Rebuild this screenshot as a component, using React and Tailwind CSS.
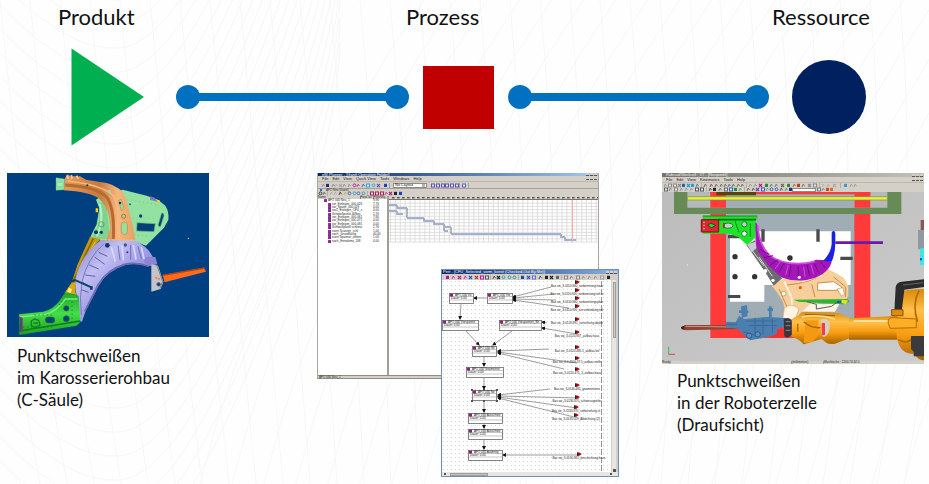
import React from "react";

/* ---------- faint mesh behind the slide ---------- */
function Mesh() {
  const fans = Array.from({ length: 34 }, (_, i) => {
    const x = i * 30 - 30;
    return `M${x} 0 Q${x + 22} 240 ${x + 70 - i * 3} 484`;
  });
  const bowls = Array.from({ length: 24 }, (_, i) => {
    const y = i * 24 - 90;
    return `M-20 ${y} Q60 ${y + 95} 120 ${y + 90} T260 ${y - 120} T340 ${y - 420}`;
  });
  const slants = Array.from({ length: 30 }, (_, i) => {
    const x = 200 + i * 32;
    return `M${x} 484 Q${x + 60} 240 ${x + 230} -10`;
  });
  return (
    <svg
      className="absolute inset-0 h-full w-full"
      viewBox="0 0 929 484"
      preserveAspectRatio="none"
      fill="none"
      stroke="#f6f8f8"
      aria-hidden="true"
    >
      {[...fans, ...bowls, ...slants].map((d) => (
        <path key={d} d={d} />
      ))}
    </svg>
  );
}

function Connector({ className }) {
  return (
    <div className={`flex items-center ${className}`}>
      <span className="size-6 shrink-0 rounded-full bg-[#0070c0]" />
      <span className="-mx-1 h-2 flex-1 bg-[#0070c0]" />
      <span className="size-6 shrink-0 rounded-full bg-[#0070c0]" />
    </div>
  );
}

/* ---------- body panel, C pillar ---------- */
function PillarDrawing() {
  return (
    <svg
      viewBox="21 24 606 492"
      className="block h-[164px] w-[202px] bg-[#004080]"
      role="img"
      aria-label="C-Säule"
    >
      <defs>
        <linearGradient id="arch" x1="0" y1="0" x2="1" y2="1">
          <stop offset="0" stopColor="#8582c8" />
          <stop offset=".3" stopColor="#c0bef2" />
          <stop offset=".55" stopColor="#9b98e0" />
          <stop offset="1" stopColor="#7673bd" />
        </linearGradient>
        <linearGradient id="pillar" x1="0" y1="0" x2="1" y2="0">
          <stop offset="0" stopColor="#e39c5c" />
          <stop offset=".5" stopColor="#c67a3d" />
          <stop offset=".75" stopColor="#f6b67c" />
          <stop offset="1" stopColor="#e9a163" />
        </linearGradient>
        <linearGradient id="sill" x1="0" y1="0" x2="0" y2="1">
          <stop offset="0" stopColor="#1fa52a" />
          <stop offset=".5" stopColor="#45dc4a" />
          <stop offset="1" stopColor="#18a022" />
        </linearGradient>
      </defs>
      <path d="M368 74 L440 92 L474 104 L496 122 Q508 140 505 165 L492 188 L438 242 L402 228 L290 226 L270 218 L290 178 L298 130 L288 104 L300 96Z" fill="#93e2a2" />
      <path d="M300 112 L318 112 L330 225 L275 222 L296 178Z" fill="#7fd290" />
      <path d="M300 118 Q312 170 290 214" fill="none" stroke="#b7f2c2" strokeWidth="6" />
      <path d="M168 38 L194 42 L192 74 L168 76Z" fill="#93e2a2" stroke="#6dc080" />
      <path d="M171 52h18v13h-18z" fill="#a9edb5" stroke="#5fb373" />
      <path d="M194 42 L202 28 L212 34 L240 34 L258 44 L320 54 Q366 66 378 100 L398 180 L406 226 L320 226 L330 190 Q330 130 296 100 Q266 80 192 76Z" fill="url(#pillar)" />
      <path d="M196 60 Q300 66 324 102 Q344 140 340 222" fill="none" stroke="#b56a30" strokeWidth="9" />
      <path d="M204 48 Q310 60 342 94 Q358 126 358 218" fill="none" stroke="#f9b880" strokeWidth="5" />
      <path d="M200 32l6 10m8-12l2 12m14-10l4 10" stroke="#ffc893" strokeWidth="5" />
      <rect x="364" y="171" width="18" height="38" rx="9" fill="#93e2a2" stroke="#c58446" strokeWidth="2" />
      <path d="M356 106l8-3 8 28-8 6z" fill="#93e2a2" stroke="#c58446" strokeWidth="2" />
      <circle cx="371" cy="154" r="6" fill="#93e2a2" stroke="#b56a30" strokeWidth="3" />
      <circle cx="328" cy="80" r="5" fill="#93e2a2" />
      <circle cx="262" cy="61" r="3" fill="#0d3860" />
      <circle cx="360" cy="114" r="4" fill="#193c5b" />
      <path d="M411 173 L466 176 L462 200 L410 198Z" fill="#073d78" stroke="#6dbb80" strokeWidth="2" />
      <path d="M485 144 Q492 142 492 152 L482 184 Q475 188 475 178Z" fill="#073d78" stroke="#6dbb80" strokeWidth="2" />
      <circle cx="422" cy="153" r="5" fill="#073d78" />
      <circle cx="390" cy="118" r="3" fill="#276b62" />
      <path d="M382 104 L470 118 L494 132 M398 160 L470 158 M402 210 L450 214" fill="none" stroke="#6dc080" strokeWidth="2" strokeDasharray="3 9" />
      <path d="M450 94 l14 4 8 12 -22 -6z" fill="#7b78b8" />
      <path d="M472 105h7v8h-7zM287 130h7v12h-7z" fill="#f2d21c" />
      <circle cx="304" cy="178" r="8" fill="none" stroke="#5ba66b" strokeWidth="3" />
      <circle cx="288" cy="202" r="6" fill="#0b3a66" />
      <circle cx="304" cy="202" r="5" fill="#0b3a66" />

      <path d="M270 216 L302 222 L258 270 L232 330 L224 386 L194 384 L216 350 L232 300Z" fill="#c69a10" />
      <path d="M280 220 L248 286 L206 380" fill="none" stroke="#8c6900" strokeWidth="5" />
      <path d="M286 230 L250 296" stroke="#e9c22e" strokeWidth="3" />
      <path d="M196 382 L222 346 L228 390Z" fill="#d8a916" />
      <path d="M206 368l10 4-4 12-10-4z" fill="#fff27a" />

      <path d="M302 226 L404 226 Q452 248 466 294 L446 304 Q410 292 376 300 Q322 316 296 362 L256 440 L246 470 L238 468 L232 400 Q222 370 230 326 Q250 264 302 226Z" fill="url(#arch)" />
      <path d="M312 236 Q262 280 246 350 Q238 400 244 450" fill="none" stroke="#7975c2" strokeWidth="3" />
      <path d="M296 262 L322 274 M284 276 L314 298 M268 300 L296 312 M256 330 L286 334 M248 352 L274 368 M244 374 L266 382" stroke="#6360a8" strokeWidth="3" />
      <path d="M334 246 L346 290 M366 240 L370 286 M400 240 L408 284 M424 246 L432 282" stroke="#d9d7ff" strokeWidth="5" />
      <path d="M354 242 L360 284 M392 240 L392 284 M414 244 L424 280" stroke="#716eb9" strokeWidth="3" />
      <path d="M446 304 Q410 290 374 298 Q320 314 294 360 L254 440" fill="none" stroke="#6d6ab6" strokeWidth="5" />
      <path d="M438 276 L466 276 L472 298 L446 304 L432 290Z" fill="#8986d2" />
      <path d="M302 224 L404 226" stroke="#f9b97f" strokeWidth="4" strokeDasharray="7 4" />
      <circle cx="322" cy="241" r="7" fill="#14346f" />
      <circle cx="376" cy="240" r="5" fill="#4d4a92" />
      <circle cx="382" cy="262" r="3" fill="#35337a" />
      <path d="M222 344 L276 368" stroke="#0c4468" strokeWidth="6" />
      <path d="M216 344h8v8h-8zM270 364h8v10h-8z" fill="#0c4468" />

      <path d="M454 298 L474 302 L490 350 L482 372 L454 380 Z" fill="#c4c4c8" />
      <path d="M472 304 L488 350 L480 370" fill="none" stroke="#7f8088" strokeWidth="3" />
      <path d="M466 338l20 6" stroke="#ff6a24" strokeWidth="4" strokeDasharray="6 3" />
      <circle cx="476" cy="358" r="6" fill="#0b3f78" stroke="#8a8a90" strokeWidth="2" />
      <path d="M488 330 L612 308 L618 320 L494 352Z" fill="#ff6a1c" />
      <path d="M488 331 L614 309" stroke="#b84306" strokeWidth="4" />

      <path d="M57 448 L130 440 Q160 434 180 406 L196 382 L236 392 L241 470 L230 482 L58 510Z" fill="url(#sill)" />
      <path d="M60 456 L136 448 Q170 440 196 402 L232 402" fill="none" stroke="#74f077" strokeWidth="4" />
      <path d="M58 498 L240 468" stroke="#0f7d18" strokeWidth="4" />
      <rect x="136" y="456" width="28" height="18" rx="8" fill="#0a4178" stroke="#157f1c" strokeWidth="2" />
      <circle cx="199" cy="430" r="8" fill="#0a4178" stroke="#157f1c" strokeWidth="2" />
      <circle cx="199" cy="461" r="9" fill="#0a4178" stroke="#157f1c" strokeWidth="2" />
      <path d="M94 468l10-6 12 4 4 14-14 8-12-6z M100 474h14" fill="none" stroke="#157f1c" strokeWidth="4" />
      <path d="M58 458h8v40h-8z" fill="#136d4c" />
      <path d="M56 456 L66 460 V500" fill="none" stroke="#b2129e" strokeWidth="4" />
      <path d="M104 450h60M70 486h96M178 420l10-14M216 410v64" stroke="#0c6f14" strokeWidth="3" strokeDasharray="3 9" />
      <circle cx="565" cy="220" r="2" fill="#dbe6f2" />
    </svg>
  );
}

/* ---------- small pieces shared by the program windows ---------- */
function ToolStrip({ glyphs, width }) {
  return (
    <svg viewBox={`0 0 ${width} 5`} width={width} height="5" className="block shrink-0" aria-hidden="true">
      {glyphs.map(([x, color, kind], i) => {
        if (kind === "box")
          return (
            <g key={i}>
              <rect x={x} y="0.5" width="4" height="4" fill={color} />
              <rect x={x + 1} y="1.5" width="2" height="2" fill="#e8e4f4" />
            </g>
          );
        if (kind === "bar") return <rect key={i} x={x} y="0" width="0.6" height="5" fill={color} />;
        if (kind === "x") return <path key={i} d={`M${x} 1l3 3m0-3l-3 3`} stroke={color} strokeWidth="1.1" />;
        if (kind === "o") return <circle key={i} cx={x + 1.5} cy="2.3" r="1.4" fill="none" stroke={color} strokeWidth="0.9" />;
        if (kind === "fill") return <rect key={i} x={x} y="0.8" width="3" height="3.2" fill={color} />;
        return <path key={i} d={`M${x} 4L${x + 1.2} 1.2L${x + 2.6} 3.2`} fill="none" stroke={color} strokeWidth="0.8" />;
      })}
    </svg>
  );
}

function WindowButtons() {
  return (
    <span className="ml-auto flex gap-px pr-px">
      {["a", "b", "c"].map((k) => (
        <span key={k} className="h-[3px] w-[3px] border-b border-[#55524c] bg-[#d4d0c8]" />
      ))}
    </span>
  );
}

const ganttTools = [
  [3, "#8a8780"], [7, "#16307c", "fill"], [13, "#7d7a74"], [16, "#aaa69c"], [20, "#aaa69c", "x"], [24, "#8a8780"], [29, "#8a8780"],
  [34, "#b0209a", "o"], [38, "#c020a0"], [43, "#2b50c8"], [47, "#2f9ee8", "box"], [53, "#2fa0d8", "o"], [58, "#6a58c0", "x"],
  [65, "#1a44c8", "fill"], [70, "#888", "bar"],
];
const ganttToolsRight = [0, 5, 10, 14, 19, 24].map((x) => [x, "#5a52b0", "box"]).concat([[28, "#888", "bar"], [31, "#5568c8", "box"], [37, "#888", "bar"]]);
const ganttToolsLow = [
  [1, "#333", "o"], [5, "#555"], [9, "#999", "bar"], [12, "#aaa69c"], [16, "#aaa69c"], [21, "#222"], [26, "#c8b420"], [30, "#3a6ab8", "o"],
  [35, "#3a9ab8", "o"], [39, "#3a6ab8", "o"], [44, "#3a9ab8", "o"], [49, "#999", "bar"], [52, "#9a1c60", "box"], [57, "#b01848", "box"],
  [62, "#aa1c58", "box"], [67, "#c02868"], [71, "#a02c80", "x"], [76, "#222", "fill"], [81, "#1a44c8", "fill"],
];

const operations = [
  ["AFO 040 Neu_1", "9.96", 1], ["vor_Einlegen_000-029", "7.76"], ["vor_Spann_000-029", "4.00"], ["vor2_Einlegen_CFU_s", "4.00"],
  ["Schweißpunkt 40Neu", "2.76"], ["vor_Einlegen_000-061", "7.80"], ["vor_Einlegen_000-071", "4.00"], ["vor_Einlegen_000-081", "4.00"],
  ["Schweißpunkt schliess", "2.76"], ["nurnr Scanner_schl", "1.00"], ["nach_Grundfläche", "40.00"],
  ["nurnr Spanner_öffnen", "1.00"], ["nach_Entnahme_208", "4.00"],
];

const bars = [
  [388, 9, 205], [397, 10, 208], [388, 9, 211], [397, 6, 214], [407, 17, 218], [424, 10, 221], [434, 10, 224],
  [444, 7, 227], [444, 4, 231], [451, 110, 234], [561, 4, 237], [565, 11, 240],
];

function GanttWindow() {
  return (
    <div className="flex h-[206px] w-[282px] flex-col border-x border-[#a9a69f] bg-[#d4d0c8] font-['Liberation_Sans',sans-serif] text-[4px] leading-[4px] text-[#222]">
      <div className="flex h-[3px] items-center bg-linear-to-r from-[#0a246a] to-[#a6caf0] text-white">
        <span className="pl-1">eM-Planner - [Gantt Operation Folder]</span>
        <WindowButtons />
      </div>
      <div className="flex h-[5px] items-center gap-1 pl-1">
        {["File", "Edit", "View", "Quick View", "Tools", "Windows", "Help"].map((m) => (
          <span key={m}>{m}</span>
        ))}
        <WindowButtons />
      </div>
      <div className="flex h-[7px] items-center border-t border-[#bbb7ae] pl-px">
        <ToolStrip glyphs={ganttTools} width={72} />
        <span className="mr-1 ml-[2px] flex h-[5px] w-[34px] items-center justify-between border border-[#8d8a83] bg-white px-px">
          No Layout <span className="h-[3px] w-[3px] bg-[#b7b3aa]" />
        </span>
        <ToolStrip glyphs={ganttToolsRight} width={40} />
      </div>
      <div className="flex h-[3px] items-center gap-1 border-t border-[#a5a199] pl-[2px] text-[3px] leading-[3px]">
        <span className="h-[2px] w-[2px] bg-[#2a6ad0]" />
        AFO Neu (Gantt)
      </div>
      <div className="flex h-[5px] items-center">
        <ToolStrip glyphs={ganttToolsLow} width={86} />
      </div>
      <div className="flex min-h-0 flex-1">
        <div className="w-[69px] bg-white">
          <table className="h-[47px] w-full table-fixed border-collapse text-[3px] leading-[3px]">
            <thead className="bg-[#d4d0c8] text-left">
              <tr>
                <th className="w-[42px] border-r border-[#8d8a83] p-0 font-normal">Name</th>
                <th className="w-[13px] border-r border-[#8d8a83] p-0 font-normal whitespace-nowrap">Float list</th>
                <th className="p-0 font-normal">Planning</th>
              </tr>
            </thead>
            <tbody>
              {operations.map(([name, time, top], i) => (
                <tr key={i}>
                  <td className={`p-0 whitespace-nowrap ${top ? "pl-[6px]" : "pl-[10px]"}`}>
                    <span className="flex items-center gap-px">
                      <span className="h-[3px] w-[3px] shrink-0 bg-linear-to-br from-[#d01cb4] to-[#3a2f78]" />
                      {name}
                    </span>
                  </td>
                  <td className="p-0" />
                  <td className="p-0">{time}</td>
                </tr>
              ))}
            </tbody>
          </table>
        </div>
        <div className="w-[2px] bg-[#a19e97]" />
        <div className="flex min-w-0 flex-1 flex-col bg-white">
          <div className="h-[4px] border-b border-[#77746d] bg-[#d4d0c8]">
            <svg viewBox="0 0 209 3" className="block h-[3px] w-full" aria-hidden="true">
              {Array.from({ length: 42 }, (_, i) => (
                <rect key={i} x={3 + i * 5} y="1" width="2.6" height="1.4" fill="#55524c" />
              ))}
            </svg>
          </div>
          <svg viewBox="389 200 209 43" className="block h-[43px] w-full" role="img" aria-label="Gantt">
            {Array.from({ length: 43 }, (_, i) => (
              <path key={i} d={`M${390.5 + i * 4.9} 200V242`} stroke="#d8d8d8" strokeWidth="0.8" />
            ))}
            {Array.from({ length: 13 }, (_, i) => (
              <path key={i} d={`M388 ${203.2 + i * 3.24}H598`} stroke="#d8d8d8" strokeWidth="0.8" />
            ))}
            <path d="M397 205v4M397 211v4M407 208v10M424 218v4M434 221v4M444 224v7M451 227v7M561 234v4M565 237v4" stroke="#555" strokeWidth="0.8" />
            {bars.map(([x, w, y]) => (
              <rect key={`${x}-${y}`} x={x} y={y - 1} width={w} height="2" fill="#a3b1d0" />
            ))}
            <path d="M572.5 200V242" stroke="#ffa8a8" />
          </svg>
        </div>
      </div>
      <div className="flex h-[4px] items-center border-y border-[#918e87] pl-px text-[3px] leading-[3px]">AFO 040 Neu_1</div>
    </div>
  );
}

/* ---------- PERT window ---------- */
const pertTools = [
  [4, "#b01890", "fill"], [10, "#c01890"], [16, "#c01890", "x"], [22, "#b01890"], [27, "#2b50c8", "x"], [33, "#d03030", "x"], [38, "#b01890", "box"],
  [43, "#555", "box"], [48, "#999", "bar"], [51, "#333"], [55, "#222", "x"], [60, "#2a9aa8", "o"], [66, "#2a9aa8", "o"], [71, "#2a9aa8", "o"],
  [76, "#999", "bar"], [79, "#1f44a8", "fill"], [85, "#2058c0", "x"], [90, "#6a62d0", "box"], [97, "#333"], [103, "#222", "fill"], [108, "#222", "x"],
  [114, "#5a6a50", "fill"], [119, "#999", "bar"], [122, "#8a8780", "box"], [128, "#777"], [134, "#8a8780", "box"], [140, "#8a8780"],
  [146, "#8a8780"], [152, "#8a8780"], [158, "#999", "box"], [165, "#222", "fill"],
];
const nodes = [
  [450, 292, 24, "AFO 030 Vorbe"], [488, 292, 25, "AFO 030 Vorbe"], [443, 319, 36, "AFO 040 Vorspannen_020"], [500, 319, 42, "AFO 030 Vorspannen_Beglaub"],
  [473, 345, 24, "AFO 030 Neu_"], [467, 366, 37, "AFO 030 Geometrieren_1"], [473, 389, 24, "AFO 030 Neu_2"],
  [469, 412, 34, "AFO 030 Ausschweissen"], [469, 428, 34, "AFO 030 Ausschweissen"], [469, 449, 34, "AFO 030 Ausbringen"],
];
const inputs = [
  [578, 281, "Bas vw_3-0110.960_vorbereitung.haus"],
  [578, 289, "Bas vw_3-0110.920_vorbereitung.teil.re"],
  [578, 297, "Bas vw_3-0110.960_vorbereitungsplan"],
  [578, 305, "Bas vw_3-0110.920_vor.verbindung.teil"],
  [578, 318, "Bas vw_3-0120.891_vorrichtung.objekt"],
  [578, 331, "Bas vw_3-0120.937_aufbau.haus"],
  [578, 346, "Bas vw_3-0120.485.5_aufbau.teil"],
  [578, 357, "Bas vw_3-0.4500.37.5_aufbau.stelle"],
  [578, 368, "Bas vw_3-0120.475_3_aufbau.haus"],
  [578, 384, "Bas vw_3-0130.485_geometrieren"],
  [578, 396, "Bas vw_3-0130.870_schweissgreifer"],
  [577, 406, "Bas vw_3-0130.870_vorbereitung.st"],
  [577, 414, "Bas vw_3-0130.029_Abdichtung (2)"],
  [580, 453, "Bas vw_3-0130.831_beschichtung.haus"],
];
const flows = [
  "M488 297H475", "M462 303L461 318", "M467 330L480 344", "M513 330L494 344", "M485 355V365", "M485 377V388", "M485 400V411", "M485 423V427",
  "M485 439V448", "M580 454H504", "M552 286L514 296", "M555 293L514 297", "M557 299L514 298", "M570 307L514 299", "M548 322L543 321", "M578 333L543 327",
  "M550 348L499 350", "M578 362L499 351", "M565 368L499 352", "M551 388L499 394", "M580 397L499 395", "M578 407L499 396", "M575 416L499 397",
];

function PertWindow() {
  return (
    <div className="flex h-[208px] w-[178px] flex-col border border-[#6f8fb4] bg-[#d4d0c8] font-['Liberation_Sans',sans-serif] text-[4px] leading-[4px]">
      <div className="flex h-[4px] shrink-0 items-center bg-linear-to-r from-[#0a246a] to-[#8fb4e0] pl-px text-white">
        Pert - [CFU_Selected_vorm_konst (Checked-Out By Me)]
        <WindowButtons />
      </div>
      <div className="flex h-[6px] shrink-0 items-center">
        <ToolStrip glyphs={pertTools} width={172} />
      </div>
      <div className="flex min-h-0 flex-1">
        <svg viewBox="443 279 169 192" className="block h-[192px] w-[169px] bg-white" role="img" aria-label="Pert">
          <defs>
            <pattern id="dots" width="4" height="4" patternUnits="userSpaceOnUse">
              <rect width="1" height="1" fill="#dcdcdc" />
            </pattern>
            <marker id="tip" viewBox="0 0 4 4" refX="3" refY="2" markerWidth="4" markerHeight="4" markerUnits="userSpaceOnUse" orient="auto">
              <path d="M0 0L4 2L0 4Z" fill="#111" />
            </marker>
          </defs>
          <rect x="443" y="279" width="169" height="192" fill="url(#dots)" />
          <path d="M602.5 280V471" stroke="#8a8a8a" strokeWidth="0.9" strokeDasharray="6 2" />
          {flows.map((d) => (
            <path key={d} d={d} stroke="#5c5c5c" strokeWidth="0.6" markerEnd="url(#tip)" />
          ))}
          {nodes.map(([x, y, w, label]) => (
            <g key={`${x}-${y}`}>
              <rect x={x + 0.5} y={y + 0.5} width={w} height="10" fill="#fff" stroke="#666" strokeWidth="0.8" />
              <path d={`M${x} ${y + 3.5}h${w}M${x} ${y + 7}h${w}`} stroke="#888" strokeWidth="0.5" />
              <rect x={x + 1} y={y + 0.6} width="3" height="2.8" fill="#8a1f86" />
              <text x={x + 6} y={y + 3} fontSize="3" fill="#111">{label.slice(0, Math.floor((w - 6) / 1.7))}</text>
              <text x={x + 2} y={y + 6.4} fontSize="3" fill="#111">Dauer: 0.00</text>
            </g>
          ))}
          <path d="M472 388h2v2h-2zM484 388h2v2h-2zM497 388h2v2h-2zM472 399h2v2h-2zM484 399h2v2h-2zM497 399h2v2h-2z" fill="#555" />
          {inputs.map(([x, y, label]) => (
            <g key={label}>
              <path d={`M${x - 2} ${y - 1.5}h2.4l2.4 1.5l-2.4 1.7h-2.4z`} fill="#a80c10" />
              <path d={`M${x - 2} ${y - 1.5}h1.2v3.2h-1.2z`} fill="#222" />
              <text x={x} y={y + 5} fontSize="3" fill="#222" textAnchor="middle">{label}</text>
            </g>
          ))}
        </svg>
        <div className="ml-px flex w-[4px] flex-col items-center bg-[#e8e6e1]">
          <span className="mt-[2px] h-[56px] w-[3px] border border-[#a09d96] bg-[#d4d0c8]" />
          <span className="mt-auto h-[3px] w-[3px] bg-[#55524c]" />
        </div>
      </div>
      <div className="flex h-[4px] shrink-0 items-center bg-[#e8e6e1] pl-[2px]">
        <span className="h-[2px] w-[2px] bg-[#55524c]" />
        <span className="ml-1 h-[3px] w-[38px] border border-[#a09d96] bg-[#c8c4bc]" />
        <span className="mr-[6px] ml-auto h-[2px] w-[2px] bg-[#55524c]" />
      </div>
    </div>
  );
}

/* ---------- robot cell window ---------- */
const cellTools = [
  [2, "#888"], [6, "#888", "box"], [11, "#8a8780", "box"], [16, "#888", "x"], [20, "#1a6ac0", "fill"], [25, "#1a9ad8", "x"], [29, "#28a0c8", "fill"],
  [34, "#3a62b0"], [39, "#999", "bar"], [42, "#554"], [48, "#8a3030"], [53, "#555"], [58, "#555"], [62, "#555"], [66, "#555"], [70, "#555"],
  [75, "#555"], [79, "#555"], [84, "#999", "bar"], [87, "#888"], [92, "#888"], [97, "#c01888", "x"], [103, "#2a8a3c", "fill"], [108, "#2a8a3c"],
  [113, "#666"], [119, "#666", "x"], [125, "#2f8a3c", "fill"], [131, "#c03c20"], [135, "#c03c20", "fill"], [140, "#8c5030"], [146, "#888", "x"],
  [151, "#888", "box"], [157, "#999", "bar"], [160, "#aaa"], [165, "#aaa"], [171, "#aaa", "x"], [178, "#999", "bar"], [182, "#3a9ae0", "fill"],
  [188, "#9a9690"], [192, "#9a9690"],
];
const cellToolsLow = [
  [2, "#666", "box"], [7, "#777"], [12, "#888", "box"], [18, "#888"], [23, "#888"], [28, "#888"], [33, "#555", "box"], [38, "#555", "box"],
  [44, "#999", "bar"], [47, "#333"], [51, "#222", "fill"], [57, "#666"], [62, "#666", "box"], [67, "#2a62c0", "box"], [72, "#2a8a40", "fill"],
  [77, "#3aa840"], [82, "#999", "bar"], [85, "#555"], [90, "#444"], [94, "#6a3ab8", "x"], [99, "#3a52c8", "box"], [104, "#888"],
  [108, "#2a52c8", "o"], [113, "#2a52c8", "o"], [118, "#444"], [123, "#2a9a50"], [127, "#1a2a90", "fill"],
];

function RobotWindow() {
  return (
    <div className="flex h-[191px] w-[262px] flex-col bg-[#d4d0c8] font-['Liberation_Sans',sans-serif] text-[4px] leading-[4px] text-[#222]">
      <div className="flex h-[4px] items-center bg-linear-to-r from-[#77746e] to-[#c4c1ba] pl-1 text-[#f2f0ea]">
        Robcad/Workcell : V7 - [Neupunkt]
        <WindowButtons />
      </div>
      <div className="flex h-[5px] items-center gap-1 pl-1">
        {["File", "Edit", "View", "Kinematics", "Tools", "Help"].map((m) => (
          <span key={m}>{m}</span>
        ))}
        <WindowButtons />
      </div>
      <div className="flex h-[5px] items-center border-t border-[#bdb9b0]">
        <ToolStrip glyphs={cellTools} width={200} />
      </div>
      <div className="flex h-[5px] items-center">
        <ToolStrip glyphs={cellToolsLow} width={130} />
        <span className="h-[4px] w-[24px] border border-[#8d8a83] bg-white" />
        <ToolStrip glyphs={[[1, "#777", "box"], [6, "#777"], [10, "#d04a20", "fill"], [14, "#e0681a", "fill"]]} width={20} />
      </div>
      <svg viewBox="21 81 786 507" className="block h-[169px] w-[262px] bg-[#c2c2c2]" role="img" aria-label="Roboterzelle">
        <defs>
          <linearGradient id="floor" x1="0" y1="0" x2="1" y2="1">
            <stop offset="0" stopColor="#bcbcbc" />
            <stop offset="1" stopColor="#cbcbcb" />
          </linearGradient>
          <linearGradient id="robot" x1="0" y1="0" x2="0" y2="1">
            <stop offset="0" stopColor="#d98a0a" />
            <stop offset=".3" stopColor="#ffc04a" />
            <stop offset=".65" stopColor="#f79c10" />
            <stop offset="1" stopColor="#a86200" />
          </linearGradient>
        </defs>
        <rect x="21" y="81" width="786" height="507" fill="url(#floor)" />
        <path d="M166 81H646V519H166Z" fill="#ff3a3a" />
        <path d="M213 88H598V472H213Z" fill="#a1adb5" />
        <path d="M57 81H739V147H57Z" fill="#688a56" />
        <path d="M97 81H697V128H97Z" fill="#b5b9b9" />
        <path d="M166 81H213V128H166ZM598 81H646V128H598Z" fill="#ff3a3a" />
        <path d="M213 88H598V128H213Z" fill="#a1adb5" />
        <path d="M166 81H646V88H166Z" fill="#ff3a3a" />
        <path d="M184 81H303V91H184Z" fill="#5a4208" />
        <path d="M97 95H697V105H97Z" fill="#efec3c" stroke="#6a9a48" strokeWidth="2" />
        <path d="M225 199H587V360H328V410H225Z" fill="#fff" />
        <path d="M319 193h10v37h-10zM484 193h10v37h-10zM556 275h37v10h-37zM219 210h36v10h-36zM219 390h37v9h-37zM401 330h10v18h-10z" fill="#4a4a4a" />
        {[[240, 275], [405, 279], [240, 335], [299, 335]].map(([x, y]) => (
          <circle key={`${x}-${y}`} cx={x} cy={y} r="8" fill="#333" />
        ))}

        <path d="M350 362 L384 342 L520 312 L566 338 L580 362 L580 392 L572 408 L470 412 L442 438 L420 462 L384 486 L376 470 L392 444 L384 410 L366 382Z" fill="#f6cf9b" />
        <path d="M372 372 L396 426 L404 462 M396 360 Q470 354 506 324 M470 358 L480 396 M536 336 L572 366 V396" fill="none" stroke="#c98e4c" strokeWidth="3" />
        <path d="M388 350 L410 398 L412 452 M440 350 L500 330" fill="none" stroke="#fff0d8" strokeWidth="6" />
        <path d="M388 430 Q410 410 432 432 L424 454 L396 482 L382 470Z" fill="#fff4e4" stroke="#d6a468" strokeWidth="2" />
        <path d="M470 412 Q500 424 556 412 L540 440 H440Z" fill="#fdf3e2" />
        <path d="M488 354 L536 350 L560 366 V376 L488 376Z" fill="#fff" stroke="#c98e4c" strokeWidth="3" />
        <path d="M546 372l18-4 4 20-8 6z" fill="#fff" stroke="#c98e4c" strokeWidth="2" />
        <circle cx="386" cy="386" r="7" fill="#fff" stroke="#b77a35" strokeWidth="2" />
        <circle cx="436" cy="368" r="5" fill="#e06a10" />
        <path d="M416 404 L578 402 L584 410 L566 418 L430 410Z" fill="#2fb62a" />
        <path d="M560 404l20 2-8 12-12-4z" fill="#dfe21f" />
        <path d="M456 410 L484 418 M484 432 L530 424 L548 410 M484 418 V432" fill="none" stroke="#555d66" strokeWidth="3" />
        <path d="M546 408h12v6h-12z" fill="#3344d0" />

        <path d="M300 172 L306 176 Q310 236 338 268 Q390 306 458 294 L484 284 L520 286 L530 292 Q516 334 452 346 Q384 352 346 316 Q308 286 302 236Z" fill="#a516b8" />
        <path d="M308 180 Q312 240 344 272 Q396 308 480 290" fill="none" stroke="#d24be4" strokeWidth="5" />
        <path d="M316 254l26 14M326 278l28-6M344 302l24-18M372 322l14-26M402 334l6-32M430 338v-34M464 332l-8-32M490 322l-12-28M510 308l-14-18" stroke="#6e0b80" strokeWidth="3" />
        <path d="M360 312l16-22M392 330l8-30M450 336l-4-30M476 328l-8-30" stroke="#c853da" strokeWidth="3" />
        <circle cx="404" cy="279" r="7" fill="#333" />
        <circle cx="433" cy="337" r="5" fill="#fff" />
        <path d="M530 204 Q530 198 536 198 Q541 198 541 206 V236 Q540 268 530 290 L504 288 Q528 264 530 236Z" fill="#1a20e4" />
        <path d="M541 229 H684 V237 H541Z" fill="#6a1aa8" />

        <path d="M274 240 L300 226 L310 262 L342 304 L382 340 L356 362 L330 320Z" fill="#6b6b6e" />
        <path d="M276 238 L302 230 L304 250 L290 262Z" fill="#c9c9d2" />
        <path d="M288 252 L326 302 M312 276 L352 334" stroke="#d9d9df" strokeWidth="3" />
        <circle cx="331" cy="318" r="6" fill="#fff" />
        <circle cx="354" cy="346" r="5" fill="#fff" />

        <path d="M143 153 H307 V164 H301 V218 L276 240 L250 216 L220 206 L144 206 V196 H190 V164 H143Z" fill="#1ee32a" />
        <path d="M190 164H303" stroke="#0a6e12" strokeWidth="5" />
        <path d="M143 153H307" stroke="#0f8a18" strokeWidth="3" />
        <path d="M139 164H191V201H139Z" fill="#e0252c" stroke="#7a0c10" strokeWidth="3" />
        <path d="M158 181l10-6 14 6-12 7z" fill="#1ee32a" stroke="#123" strokeWidth="2" />
        <path d="M144 172h6m-6 9h6m-6 10h6" stroke="#fff" strokeWidth="2" />
        <path d="M208 176q12-4 22 0q8 6 0 12q-12 4-22 0z" fill="#c9ccd0" stroke="#0c8a16" strokeWidth="3" />
        <path d="M206 174v16" stroke="#d0201c" strokeWidth="4" />
        <circle cx="268" cy="178" r="8" fill="#c9ccd0" stroke="#0c8a16" strokeWidth="3" />
        <circle cx="268" cy="206" r="8" fill="#fff" stroke="#0c8a16" strokeWidth="3" />
        <path d="M286 176v40M240 168l12 34" stroke="#0c8a16" strokeWidth="3" />

        <path d="M78 488 L90 480 L240 480 L256 492 L90 496Z" fill="#8d4636" />
        <path d="M92 484 L240 486" stroke="#d39080" strokeWidth="3" />
        <path d="M78 486l10-4v12l-8-1z" fill="#4a1a10" />
        <path d="M213 470 L242 472 L252 452 L268 462 L338 456 L404 460 L406 484 L370 490 L368 506 L338 516 L286 526 L270 514 L250 492 L213 486Z" fill="#4a7fb0" />
        <path d="M258 424l18-4 2 34-18 4zM342 424h8v34h-8zM252 436h28v8h-28zM338 430h16v8h-16z" fill="#4a7fb0" />
        <path d="M274 468h88M282 482h84M300 458v44M324 458v50M352 460v44M264 500l40 12M213 478h34" stroke="#3a6a98" strokeWidth="3" />
        <circle cx="282" cy="512" r="8" fill="#5b90c0" stroke="#2d5884" strokeWidth="3" />
        <circle cx="308" cy="508" r="8" fill="#5b90c0" stroke="#2d5884" strokeWidth="3" />
        <path d="M366 492H402V518H340L366 506Z" fill="#f23030" />

        <path d="M500 476h20v34h-20z" fill="#ff3a3a" />
        <path d="M410 462 Q430 454 446 440 L552 444 L584 460 V520 L540 536 Q520 540 510 530 L500 522 L446 538 Q430 520 410 516Z" fill="url(#robot)" />
        <path d="M498 462 Q528 458 524 490 Q520 512 506 516 L498 506Z" fill="#d4d0c8" />
        <path d="M500 474h10v36h-10z" fill="#ff3a3a" />
        <path d="M452 466 H490 V512 L470 532 L446 534 Z" fill="#f39a12" />
        <path d="M450 448 L540 452 M428 476 V500 M446 470 Q470 490 496 488" fill="none" stroke="#a86200" strokeWidth="4" />
        <path d="M440 456 Q490 446 540 462" fill="none" stroke="#ffdb8c" strokeWidth="5" />
        <path d="M386 462 Q398 456 410 464 V508 Q400 524 388 514Z" fill="#34363a" />
        <path d="M392 470h14M392 482h14M392 496h14" stroke="#8a8d92" strokeWidth="3" />
        <path d="M582 460 L740 452 V524 L582 524Z" fill="url(#robot)" />
        <path d="M596 468H716" stroke="#ffe09a" strokeWidth="6" />
        <path d="M740 380 Q760 372 807 372 V586 Q790 586 778 566 Q736 570 726 520 L722 480 L730 440Z" fill="url(#robot)" />
        <path d="M792 376 Q770 420 788 470 M730 524 Q760 540 774 516" fill="none" stroke="#b46b02" strokeWidth="5" />
        <path d="M700 476 Q696 456 716 458 L784 462 V488 L706 490Z" fill="#ffac26" stroke="#b46b02" strokeWidth="3" />
        <path d="M718 440 L722 366 Q724 352 740 350 L807 343 V366 L748 374 L740 440Z" fill="#2b2b2b" />
        <path d="M744 360L804 353" stroke="#666" strokeWidth="3" />
        <path d="M710 434h34v18h-34z" fill="#e08c10" stroke="#8c5200" strokeWidth="3" />
        <path d="M768 513H807V574H776V560L768 552Z" fill="#3a3b3e" />

        <path d="M797 165h10v42h-10z" fill="#8a5850" />
        <path d="M789 195h18v58h-18z" fill="#8f9aa0" />
        <path d="M795 250h12v50h-12z" fill="#3fe6e6" />
        <path d="M795 280h6v6h-6z" fill="#2030c8" />
        <path d="M41 545V568" stroke="#30c830" strokeWidth="3" />
        <path d="M41 568H60" stroke="#e04040" strokeWidth="3" />
        <circle cx="97" cy="300" r="2" fill="#eee" />
      </svg>
      <div className="flex h-[3px] items-center text-[3px] leading-[3px]">
        <span className="w-[130px] border-r border-[#a19e97]">Ready</span>
        <span className="w-[32px] border-r border-[#a19e97]">(millimeters)</span>
        <span>Machtische : 1200-74-62 0</span>
      </div>
    </div>
  );
}

export default function App() {
  return (
    <main className="relative min-h-screen overflow-hidden bg-[#fefefe] font-['Lato','Noto_Sans',sans-serif] text-[#111]">
      <Mesh />
      <div className="relative">
        <header className="grid grid-cols-[348fr_366fr_97fr] pt-[3px] pr-[59px] pb-px pl-[58px] text-[22px] leading-7">
          <h2>Produkt</h2>
          <h2>Prozess</h2>
          <h2>Ressource</h2>
        </header>

        <section className="mt-4 flex h-[98px] items-center pr-[63px] pl-[71px]">
          <svg viewBox="0 0 73 98" className="h-[98px] w-[73px] shrink-0" role="img" aria-label="Produkt">
            <path d="M0.5 0.5L73 49L0.5 97.5Z" fill="#00b050" />
          </svg>
          <Connector className="ml-8 flex-[233_1_0%]" />
          <div className="mx-[14px] h-[63px] w-[71px] shrink-0 bg-[#c00000]" />
          <Connector className="flex-[261_1_0%]" />
          <div className="ml-[23px] size-[74px] shrink-0 rounded-full bg-[#002060]" />
        </section>

        <section className="mt-[27px] grid grid-cols-[310fr_345fr_262px] items-start pr-[5px] pl-[7px] text-[17px] leading-[22px]">
          <figure>
            <PillarDrawing />
            <figcaption className="pt-2 pl-[10px]">
              Punktschweißen
              <br />
              im Karosserierohbau
              <br />
              (C-Säule)
            </figcaption>
          </figure>
          <div className="relative w-[282px]">
            <GanttWindow />
            <div className="absolute top-24 left-[124px]">
              <PertWindow />
            </div>
          </div>
          <figure>
            <RobotWindow />
            <figcaption className="pt-[6px] pl-[15px]">
              Punktschweißen
              <br />
              in der Roboterzelle
              <br />
              (Draufsicht)
            </figcaption>
          </figure>
        </section>
      </div>
    </main>
  );
}
